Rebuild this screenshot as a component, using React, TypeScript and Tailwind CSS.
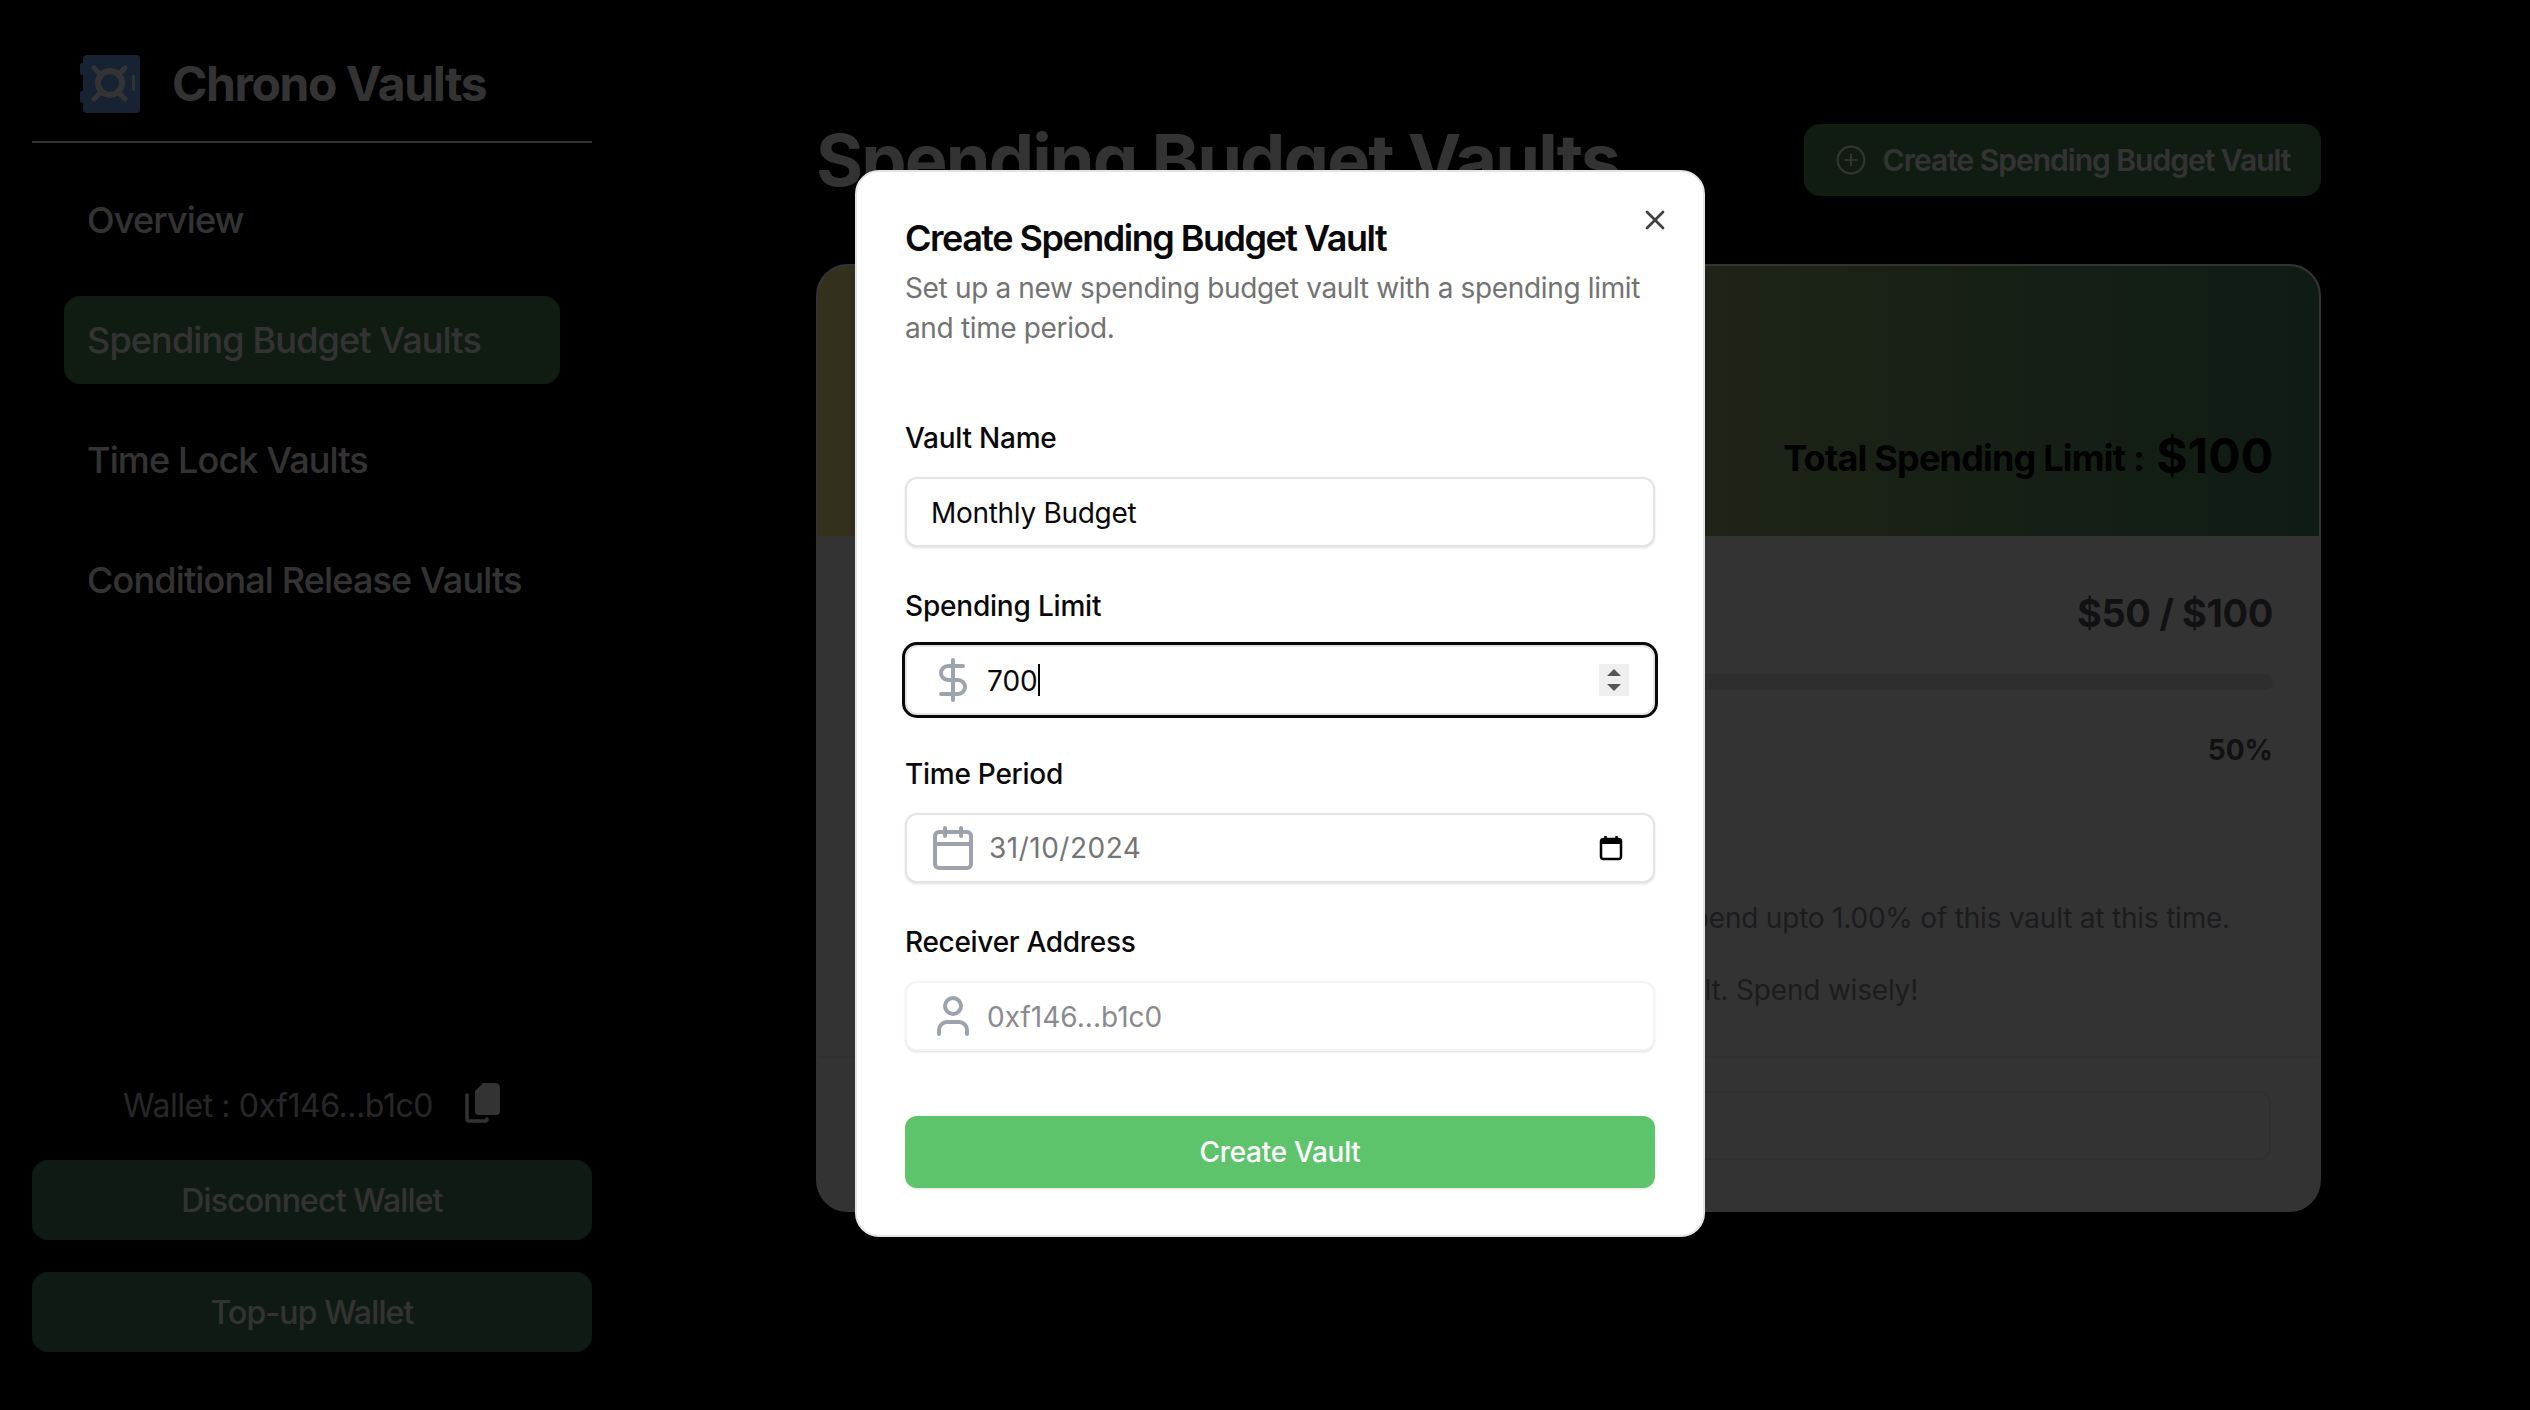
import React from 'react';
import { Calendar, DollarSign, PlusCircle, User, X } from 'lucide-react';

const navItems = ['Overview', 'Spending Budget Vaults', 'Time Lock Vaults', 'Conditional Release Vaults'];

const Logo = () => (
  <svg width="60" height="58" viewBox="0 0 60 58" fill="none">
    <rect x="3" y="0" width="57" height="58" rx="4" fill="#75a8ff" />
    <rect x="0" y="8" width="6" height="12" rx="2" fill="#75a8ff" />
    <rect x="0" y="36" width="6" height="12" rx="2" fill="#75a8ff" />
    <path d="M14 13 L45 44 M45 13 L14 44" stroke="#ffffff" strokeWidth="5" strokeLinecap="round" />
    <circle cx="30" cy="28" r="12" fill="#75a8ff" stroke="#ffffff" strokeWidth="6" />
    <rect x="52" y="20" width="3" height="16" rx="1" fill="#ffffff" />
  </svg>
);

const CopyIcon = () => (
  <svg width="36" height="40" viewBox="0 0 36 40" fill="none">
    <path d="M2 12 V36 Q2 38 4 38 H20 Q22 38 22 36" stroke="#ffffff" strokeWidth="3.5" strokeLinecap="round" />
    <path d="M18 0 H30 Q35 0 35 5 V28 Q35 32 31 32 H14 Q10 32 10 28 V8 Z" fill="#ffffff" />
  </svg>
);

const Sidebar = () => (
  <aside className="w-[624px] h-[1410px] shrink-0 flex flex-col">
    <div className="mx-8 h-[143px] border-b-2 border-[#ffffff] flex items-start pt-[55px] pl-12 gap-8">
      <Logo />
      <h1 className="text-[48px] leading-[58px] font-bold text-white tracking-[-1.4px]">Chrono Vaults</h1>
    </div>
    <nav className="mx-16 mt-[33px] flex flex-col gap-8">
      {navItems.map((item) => (
        <div
          key={item}
          className={`h-[88px] rounded-2xl pl-[23px] flex items-center whitespace-nowrap text-[36px] font-medium tracking-[-0.85px] text-white ${item === 'Spending Budget Vaults' ? 'bg-[#52865c]' : ''}`}
        >
          {item}
        </div>
      ))}
    </nav>
    <div className="mt-auto mx-8 pb-[58px]">
      <div className="flex items-center justify-center gap-8 h-[40px] mb-[37px]">
        <span className="pt-[5px] text-[32px] tracking-[-0.45px] text-[#c2c2c2]">Wallet : 0xf146...b1c0</span>
        <CopyIcon />
      </div>
      <div className="flex flex-col gap-8">
        <button className="h-20 pt-[2px] rounded-2xl bg-[#4b8263] text-[32px] tracking-[-0.85px] font-medium text-white">Disconnect Wallet</button>
        <button className="h-20 pt-[2px] rounded-2xl bg-[#4b8263] text-[32px] tracking-[-0.85px] font-medium text-white">Top-up Wallet</button>
      </div>
    </div>
  </aside>
);

const Main = () => (
  <main className="ml-[192px] w-[1505px] pt-[124px]">
    <div className="flex items-center justify-between h-[72px] mb-[68px]">
      <h2 className="text-[72px] leading-[72px] font-bold tracking-[-1.9px] text-white">Spending Budget Vaults</h2>
      <button className="h-[72px] w-[517px] rounded-2xl bg-[#52865c] flex items-center justify-center gap-4 text-[30px] tracking-[-1px] font-semibold text-white">
        <PlusCircle size={32} strokeWidth={1.6} />
        Create Spending Budget Vault
      </button>
    </div>
    <div className="h-[948px] rounded-[32px] border-2 border-[#ffffff] bg-white overflow-hidden flex flex-col">
      <div className="h-[270px] shrink-0 bg-gradient-to-r from-[#fff08c] to-[#4a8a62] flex items-end justify-end pl-12 pr-[46px] pb-[48px]">
        <span className="text-[36px] font-bold text-black leading-[60px] tracking-[-0.8px]">Total Spending Limit : </span>
        <span className="text-[48px] font-bold text-black leading-[64px] ml-3">$100</span>
      </div>
      <div className="pl-12 pr-[46px] pt-[49px] flex-1">
        <div className="text-right text-[38px] leading-[56px] font-bold tracking-[-0.4px] text-[#55555f]">$50 / $100</div>
        <div className="mt-[33px] h-4 rounded-full bg-[#e6e6e6] overflow-hidden">
          <div className="h-full w-1/2 bg-[#5ec46c]" />
        </div>
        <div className="mt-10 text-right text-[28px] leading-10 font-bold text-[#55555f]">50%</div>
        <div className="mt-[124px] text-right pr-[43px] text-[28px] leading-[48px] tracking-[-0.2px] text-[#8a8a94]">You can spend upto 1.00% of this vault at this time.</div>
        <div className="mt-6 pr-[355px] text-right text-[28px] leading-[48px] tracking-[-0.2px] text-[#8a8a94]">Use this vault. Spend wisely!</div>
      </div>
      <div className="border-t-2 border-[#f0f0f0] px-12 pt-[33px] pb-[50px]">
        <div className="h-[69px] rounded-xl border-2 border-[#ececec]" />
      </div>
    </div>
  </main>
);

const fieldBox = 'mt-[19px] h-[70px] rounded-xl bg-white flex items-center text-[28px] shadow-sm';

const Dialog = () => (
  <div className="absolute left-[855px] top-[170px] w-[850px] h-[1067px] rounded-3xl bg-white border-2 border-[#e4e4e7] px-[48px] pt-[48px]">
    <X size={32} strokeWidth={2} className="absolute right-[32px] top-[32px] text-[#404040]" />
    <h3 className="text-[36px] leading-9 font-semibold tracking-[-1.5px] text-[#09090b]">Create Spending Budget Vault</h3>
    <p className="mt-3 text-[28px] leading-10 tracking-[-0.35px] text-[#737373]">
      Set up a new spending budget vault with a spending limit and time period.
    </p>

    <div className="mt-[70px] text-[28px] leading-10 font-medium tracking-[-0.25px] text-[#09090b]">Vault Name</div>
    <div className={`${fieldBox} border-2 border-[#e4e4e7] pl-[24px] pt-[2px] tracking-[-0.3px] text-[#09090b]`}>Monthly Budget</div>

    <div className="mt-[39px] text-[28px] leading-10 font-medium tracking-[-0.2px] text-[#09090b]">Spending Limit</div>
    <div className={`${fieldBox} relative border-2 border-[#e4e4e7] outline-[3px] outline-[#09090b] pl-[22px] text-[#09090b]`}>
      <DollarSign size={48} strokeWidth={2} className="text-[#9ca3af] shrink-0" />
      <span className="ml-[10px] pt-[2px]">700</span>
      <span className="w-[2px] h-8 bg-black" />
      <div className="absolute right-[24px] top-[17px] w-[30px] h-[32px] bg-[#efefef] flex items-center justify-center">
        <svg width="16" height="26" viewBox="0 0 16 26" fill="#555555">
          <path d="M8 2 L15 9 H1 Z" />
          <path d="M1 17 H15 L8 24 Z" />
        </svg>
      </div>
    </div>

    <div className="mt-[39px] text-[28px] leading-10 font-medium tracking-[-0.25px] text-[#09090b]">Time Period</div>
    <div className={`${fieldBox} relative border-2 border-[#e4e4e7] pl-[22px] text-[#757575]`}>
      <Calendar size={48} strokeWidth={2} className="text-[#9ca3af] shrink-0" />
      <span className="ml-[12px] tracking-[0.5px]">31/10/2024</span>
      <svg className="absolute right-[30px] top-[20px]" width="24" height="26" viewBox="0 0 24 26" fill="none">
        <rect x="2" y="4" width="20" height="20" rx="2.5" stroke="#000000" strokeWidth="2.5" />
        <path d="M2 4 H22 V9 H2 Z" fill="#000000" />
        <path d="M6.5 1 V5 M17.5 1 V5" stroke="#000000" strokeWidth="2.5" />
      </svg>
    </div>

    <div className="mt-[39px] text-[28px] leading-10 font-medium tracking-[-0.3px] text-[#09090b]">Receiver Address</div>
    <div className={`${fieldBox} border-2 border-[#f4f4f5] pl-[22px] text-[#8a8a8f]`}>
      <User size={48} strokeWidth={2} className="text-[#9ca3af] shrink-0" />
      <span className="ml-[10px] pt-[2px]">0xf146...b1c0</span>
    </div>

    <button className="mt-[65px] w-full h-[72px] rounded-xl bg-[#5ec46c] text-white text-[28px] tracking-[-0.3px] font-medium shadow-sm">
      Create Vault
    </button>
  </div>
);

export default function App() {
  return (
    <div className="relative w-[2530px] h-[1410px] overflow-hidden bg-black flex font-['Inter',sans-serif]">
      <Sidebar />
      <Main />
      <div className="absolute inset-0 bg-black/80" />
      <Dialog />
    </div>
  );
}
